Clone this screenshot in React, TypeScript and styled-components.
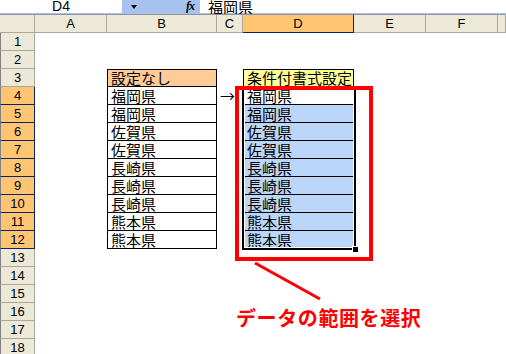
import React from 'react';
import styled, { createGlobalStyle, css } from 'styled-components';

const GlobalStyle = createGlobalStyle`
  html, body {
    margin: 0;
    padding: 0;
    background: #fff;
  }
  body {
    width: 506px;
    height: 354px;
    overflow: hidden;
    font-family: "Noto Sans CJK JP", sans-serif;
  }
`;

const Page = styled.div`
  position: relative;
  width: 506px;
  height: 354px;
  overflow: hidden;
`;

const FormulaBar = styled.div`
  display: flex;
  height: 14px;
  box-sizing: border-box;
  border-bottom: 1px solid #a7c2ef;
`;

const NameBox = styled.div`
  width: 122px;
  background: #fff;
  font-family: "Liberation Sans", sans-serif;
  font-size: 14px;
  line-height: 13px;
  text-align: center;
`;

const NameDrop = styled.div`
  width: 78px;
  background: #a7c2ef;
  display: flex;
  align-items: center;
  justify-content: space-between;
  padding: 0 6px 0 9px;
  box-sizing: border-box;
`;

const DropArrow = styled.span`
  width: 0;
  height: 0;
  border-left: 3px solid transparent;
  border-right: 3px solid transparent;
  border-top: 4px solid #000;
`;

const Fx = styled.span`
  font-family: "Liberation Serif", serif;
  font-style: italic;
  font-weight: bold;
  font-size: 12px;
  line-height: 13px;
  letter-spacing: -1px;
`;

const FormulaText = styled.div`
  flex: 1;
  padding-left: 8px;
  font-size: 15px;
  line-height: 13px;
  white-space: nowrap;
`;

const Sheet = styled.div`
  display: grid;
  grid-template-columns: 35px 72px 110px 26px 111px 72px 72px 1fr;
  grid-template-rows: 19px;
  grid-auto-rows: 18px;
`;

const ColHead = styled.div<{ $on?: boolean }>`
  box-sizing: border-box;
  border-top: 1px solid #949494;
  border-bottom: 1px solid ${p => (p.$on ? '#0a246a' : '#aca899')};
  border-right: 1px solid ${p => (p.$on ? '#0a246a' : '#aca899')};
  background: ${p => (p.$on ? '#ffc573' : '#ece9d8')};
  font-family: "Liberation Sans", sans-serif;
  font-size: 13px;
  line-height: 17px;
  text-align: center;
`;

const RowHead = styled.div<{ $on?: boolean }>`
  box-sizing: border-box;
  border-left: 1px solid #808080;
  border-bottom: 1px solid ${p => (p.$on ? '#0a246a' : '#aca899')};
  border-right: 1px solid ${p => (p.$on ? '#0a246a' : '#aca899')};
  background: ${p => (p.$on ? '#ffc573' : '#ece9d8')};
  font-family: "Liberation Sans", sans-serif;
  font-size: 13px;
  line-height: 17px;
  text-align: center;
`;

const Cell = styled.div<{ $bg?: string; $box?: boolean; $first?: boolean }>`
  box-sizing: border-box;
  padding: 0 3px;
  font-size: 15px;
  line-height: ${p => (p.$box ? (p.$first ? 16 : 17) : 18)}px;
  white-space: nowrap;
  color: #000;
  background: ${p => p.$bg ?? 'transparent'};
  ${p =>
    p.$box &&
    css`
      border-left: 1px solid #000;
      border-right: 1px solid #000;
      border-bottom: 1px solid #000;
      border-top: ${p.$first ? '1px solid #000' : 'none'};
    `}
`;

const Selection = styled.div`
  position: absolute;
  left: 242px;
  top: 86px;
  width: 114px;
  height: 164px;
  box-sizing: border-box;
  border: 2px solid #000;
  box-shadow: inset 0 0 0 1px #fff;
  pointer-events: none;
`;

const FillHandle = styled.span`
  position: absolute;
  right: -4px;
  bottom: -4px;
  width: 5px;
  height: 5px;
  background: #000;
  border: 1px solid #fff;
  border-right: none;
  border-bottom: none;
`;

const RedFrame = styled.div`
  position: absolute;
  left: 235px;
  top: 86px;
  width: 138px;
  height: 175px;
  box-sizing: border-box;
  border: 4px solid #ff0000;
  pointer-events: none;
`;

const Pointer = styled.svg`
  position: absolute;
  left: 250px;
  top: 258px;
`;

const Caption = styled.div`
  position: absolute;
  left: 236px;
  top: 306px;
  font-size: 20px;
  line-height: 24px;
  font-weight: bold;
  letter-spacing: 0.6px;
  color: #ff0000;
  white-space: nowrap;
`;

const columns = ['A', 'B', 'C', 'D', 'E', 'F', ''];

const noFormat: Record<number, string> = {
  3: '設定なし',
  4: '福岡県',
  5: '福岡県',
  6: '佐賀県',
  7: '佐賀県',
  8: '長崎県',
  9: '長崎県',
  10: '長崎県',
  11: '熊本県',
  12: '熊本県',
};

const conditional: Record<number, string> = {
  ...noFormat,
  3: '条件付書式設定',
};

const rows = Array.from({ length: 18 }, (_, i) => i + 1);
const selected = (r: number) => r >= 4 && r <= 12;

export default function App() {
  return (
    <Page>
      <GlobalStyle />
      <FormulaBar>
        <NameBox>D4</NameBox>
        <NameDrop>
          <DropArrow />
          <Fx>fx</Fx>
        </NameDrop>
        <FormulaText>福岡県</FormulaText>
      </FormulaBar>

      <Sheet>
        <ColHead />
        {columns.map((c, i) => (
          <ColHead key={i} $on={c === 'D'}>
            {c}
          </ColHead>
        ))}

        {rows.map(r => (
          <React.Fragment key={r}>
            <RowHead $on={selected(r)}>{r}</RowHead>
            <Cell />
            {noFormat[r] ? (
              <Cell $box $first={r === 3} $bg={r === 3 ? '#ffcc99' : '#fff'}>
                {noFormat[r]}
              </Cell>
            ) : (
              <Cell />
            )}
            <Cell>{r === 4 ? '→' : ''}</Cell>
            {conditional[r] ? (
              <Cell
                $box
                $first={r === 3}
                $bg={r === 3 ? '#ffff99' : r === 4 ? '#fff' : '#bad6fb'}
              >
                {conditional[r]}
              </Cell>
            ) : (
              <Cell />
            )}
            <Cell />
            <Cell />
            <Cell />
          </React.Fragment>
        ))}
      </Sheet>

      <Selection>
        <FillHandle />
      </Selection>
      <RedFrame />
      <Pointer width="80" height="50" viewBox="0 0 80 50">
        <line x1="5" y1="5" x2="70" y2="41" stroke="#ff0000" strokeWidth="3" />
      </Pointer>
      <Caption>データの範囲を選択</Caption>
    </Page>
  );
}
